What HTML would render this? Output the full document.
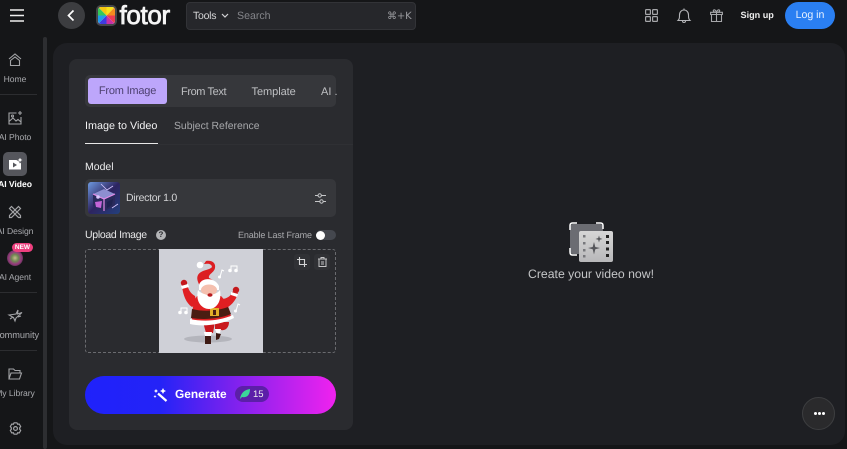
<!DOCTYPE html>
<html><head><meta charset="utf-8">
<style>
html,body{margin:0;padding:0;width:847px;height:449px;overflow:hidden;background:#151618;font-family:"Liberation Sans",sans-serif;color:#fff;text-rendering:geometricPrecision}
.a{position:absolute;white-space:nowrap}
svg{position:absolute;overflow:visible}
.nav{position:absolute;left:-15px;width:60px;text-align:center;font-size:8.6px;letter-spacing:-.05px;color:#a9aaae;white-space:nowrap;line-height:10px}
.sep{position:absolute;left:0;width:37px;height:1px;background:#2c2d30}
</style></head><body>

<!-- top bar -->
<svg style="left:9px;top:9px" width="16" height="14" fill="none" stroke="#eee" stroke-width="1.400"><path d="M1 1H15M1 6.500H15M1 12H15"/></svg>
<div class="a" style="left:58px;top:2px;width:27px;height:27px;border-radius:50%;background:#3c3d40"></div>
<svg style="left:58px;top:2px" width="27" height="27" fill="none" stroke="#fff" stroke-width="1.700"><path d="M15.500 8.500L10.500 13.500L15.500 18.500"/></svg>
<svg style="left:96px;top:5px" width="21" height="21" viewBox="0 0 21 21">
<defs><clipPath id="lg"><rect x="2" y="2" width="17" height="17" rx="3"/></clipPath></defs>
<rect x="0" y="0" width="21" height="21" rx="5" fill="#45464a"/>
<g clip-path="url(#lg)">
<rect x="2" y="2" width="17" height="17" fill="#fff"/>
<path d="M10.500 10.500L2 2H10.500Z" fill="#f5c511"/><path d="M10.500 10.500L10.500 2H19Z" fill="#f7e11b"/>
<path d="M10.500 10.500L19 2V10.500Z" fill="#f58a1f"/><path d="M10.500 10.500H19V19Z" fill="#ec3b54"/>
<path d="M10.500 10.500L19 19H10.500Z" fill="#c531a8"/><path d="M10.500 10.500V19H2Z" fill="#3f3be0"/>
<path d="M10.500 10.500L2 19V10.500Z" fill="#1f9bea"/><path d="M10.500 10.500H2V2Z" fill="#35c75a"/>
</g></svg>
<div class="a" style="left:119.500px;top:-1px;font-size:26px;line-height:32px;letter-spacing:-.35px;color:#f5f5f5;-webkit-text-stroke:.8px #f5f5f5">fotor</div>

<div class="a" style="left:186px;top:2px;width:228px;height:26px;background:#26272b;border:1px solid #323337;border-radius:4px"></div>
<div class="a" style="left:193px;top:9.500px;font-size:10.500px;line-height:13px;letter-spacing:-.25px;color:#d4d4d6">Tools</div>
<svg style="left:221px;top:13px" width="8" height="6" fill="none" stroke="#d4d4d6" stroke-width="1.200"><path d="M1 1L4 4L7 1"/></svg>
<div class="a" style="left:237px;top:9.500px;font-size:10.600px;line-height:13px;color:#84858a">Search</div>
<div class="a" style="left:387px;top:9.500px;font-size:10px;line-height:13px;letter-spacing:-.1px;color:#9b9ca0;font-family:'DejaVu Sans',sans-serif">⌘+K</div>

<svg style="left:645px;top:9px" width="13" height="13" fill="none" stroke="#a5a6a9" stroke-width="1.200"><rect x=".6" y=".6" width="4.800" height="4.800" rx=".8"/><rect x="7.600" y=".6" width="4.800" height="4.800" rx=".8"/><rect x=".6" y="7.600" width="4.800" height="4.800" rx=".8"/><rect x="7.600" y="7.600" width="4.800" height="4.800" rx=".8"/></svg>
<svg style="left:677px;top:8px" width="14" height="16" fill="none" stroke="#b4b5b8" stroke-width="1.100"><path d="M1 12.500C2.500 11 2.500 9.500 2.500 7C2.500 4 4.500 2 7 2S11.500 4 11.500 7C11.500 9.500 11.500 11 13 12.500ZM5.500 13C5.500 15 8.500 15 8.500 13M7 .5V2"/></svg>
<svg style="left:710px;top:9px" width="13" height="13" fill="none" stroke="#a5a6a9" stroke-width="1.100"><path d="M1.500 5.500H11.500V12.500H1.500ZM.6 3.300H12.400V5.500H.6ZM6.500 3.300V12.500M6.500 3.300C4 3.300 2.800 2.200 3.500 1.200C4.300 .2 6 1.200 6.500 3.300C7 1.200 8.700 .2 9.500 1.200C10.200 2.200 9 3.300 6.500 3.300Z"/></svg>
<div class="a" style="left:740.500px;top:9px;font-size:9.100px;line-height:13px;font-weight:700;color:#eee">Sign up</div>
<div class="a" style="left:785px;top:2px;width:50px;height:27px;border-radius:14px;background:#2a7ff2;font-size:10.600px;line-height:27px;text-align:center;color:#e8f1ff">Log in</div>

<!-- sidebar scrollbar -->
<div class="a" style="left:43px;top:37px;width:4px;height:412px;background:#2d2e31;border-radius:2px"></div>

<svg style="left:8px;top:53px" width="14" height="14" fill="none" stroke="#a3a4a7" stroke-width="1.100"><path d="M1 6L7 1L13 6M2.500 7.500L7 4L11.500 7.500V12.500H2.500Z"/></svg>
<div class="nav" style="top:74px">Home</div>
<div class="sep" style="top:94px"></div>

<svg style="left:8px;top:111px" width="15" height="14" fill="none" stroke="#a3a4a7" stroke-width="1.100"><path d="M8.500 2H1V13H13V6M1 10.500L5 7L8 10L10 8.500L13 11"/><circle cx="4.500" cy="5" r="1"/><path d="M12 0V4M10 2H14"/></svg>
<div class="nav" style="top:132px">AI Photo</div>

<div class="a" style="left:3px;top:152px;width:24px;height:24px;border-radius:5px;background:#55565c"></div>
<svg style="left:8px;top:157px" width="15" height="14"><path d="M1 3H9L13 6V12.500H1Z" fill="#fff"/><path d="M5 5.500L9 8L5 10.500Z" fill="#55565c"/><path d="M12 0L13 2L15 3L13 4L12 6L11 4L9 3L11 2Z" fill="#fff" stroke="#55565c" stroke-width=".6"/></svg>
<div class="nav" style="top:178.500px;color:#fff;font-weight:700">AI Video</div>

<svg style="left:8px;top:205px" width="14" height="14" fill="none" stroke="#a3a4a7" stroke-width="1.200"><path d="M1.500 3.500L3.500 1.500L12.500 10.500V12.500H10.500ZM12.500 3.500L10.500 1.500L1.500 10.500V12.500H3.500Z"/></svg>
<div class="nav" style="top:226px">AI Design</div>

<svg style="left:7px;top:250px" width="16" height="16"><defs><radialGradient id="ag" cx=".5" cy=".5" r=".6"><stop offset="0" stop-color="#c9b98f"/><stop offset=".35" stop-color="#6e8c52"/><stop offset=".65" stop-color="#97387f"/><stop offset="1" stop-color="#3c3338"/></radialGradient></defs><circle cx="8" cy="8" r="8" fill="url(#ag)"/></svg>
<div class="a" style="left:12px;top:243px;width:21px;height:9px;border-radius:5px;background:#ee3f7e;font-size:6.500px;line-height:9px;font-weight:700;text-align:center;color:#fff">NEW</div>
<div class="nav" style="top:272px">AI Agent</div>
<div class="sep" style="top:292px"></div>

<svg style="left:8px;top:309px" width="15" height="13" fill="none" stroke="#a3a4a7" stroke-width="1.100"><path d="M1 6L8 5L10 1L9.500 5L14 3.500L8 9L7 12L5.500 8.500ZM2 10L5 8M10 8L13 7"/></svg>
<div class="nav" style="top:330px;font-size:9.200px;left:-14px">Community</div>
<div class="sep" style="top:350px"></div>

<svg style="left:8px;top:368px" width="14" height="12" fill="none" stroke="#a3a4a7" stroke-width="1.100"><path d="M1 11V1H5.500L7 2.500H12V5M1 11H11.500L13.500 5H3Z"/></svg>
<div class="nav" style="top:388px">My Library</div>
<svg style="left:9px;top:422px" width="13" height="13" fill="none" stroke="#a3a4a7" stroke-width="1.200"><path d="M5 .8H8L8.600 2.300L10.200 2L11.700 4.500L10.700 5.800V7.200L11.700 8.500L10.200 11L8.600 10.700L8 12.200H5L4.400 10.700L2.800 11L1.300 8.500L2.300 7.200V5.800L1.300 4.500L2.800 2L4.400 2.300Z" stroke-linejoin="round"/><circle cx="6.500" cy="6.500" r="1.900"/></svg>

<!-- main panel -->
<div class="a" style="left:53px;top:43px;width:792px;height:402px;background:#1e1f23;border-radius:14px"></div>

<!-- left card -->
<div class="a" style="left:69px;top:59px;width:284px;height:371px;background:#2a2b2f;border-radius:8px"></div>
<div class="a" style="left:85px;top:75px;width:251px;height:32px;background:#36373b;border-radius:5px"></div>
<div class="a" style="left:88px;top:78px;width:79px;height:26px;background:#bda6fb;border-radius:3px;font-size:11px;line-height:26.500px;text-align:center;letter-spacing:-.2px;color:#4b3f6e">From Image</div>
<div class="a" style="left:181px;top:84.500px;font-size:11px;line-height:14px;letter-spacing:-.4px;color:#bfc0c3">From Text</div>
<div class="a" style="left:251.500px;top:84.500px;font-size:11px;line-height:14px;letter-spacing:-.05px;color:#bfc0c3">Template</div>
<div class="a" style="left:321px;top:84.500px;font-size:11px;line-height:14px;color:#bfc0c3">AI .</div>

<div class="a" style="left:85px;top:120px;font-size:10.800px;line-height:13px;color:#f2f2f3">Image to Video</div>
<div class="a" style="left:174px;top:120px;font-size:10.400px;line-height:13px;color:#a6a7aa">Subject Reference</div>
<div class="a" style="left:85px;top:143px;width:73px;height:1px;background:#e8e8e8"></div>
<div class="a" style="left:158px;top:143.500px;width:195px;height:1px;background:#2f3034"></div>

<div class="a" style="left:85px;top:161px;font-size:10.500px;line-height:13px;color:#ededee">Model</div>
<div class="a" style="left:85px;top:179px;width:251px;height:38px;background:#36373b;border-radius:5px"></div>
<svg style="left:88px;top:182px" width="32" height="32" viewBox="0 0 32 32">
<defs><linearGradient id="cb" x1="0" y1="0" x2="1" y2="1"><stop offset="0" stop-color="#6f9ae0"/><stop offset=".5" stop-color="#2d2460"/><stop offset="1" stop-color="#23407e"/></linearGradient></defs>
<rect width="32" height="32" rx="3" fill="url(#cb)"/>
<path d="M16 7L27 12V24L16 29L5 24V12Z" fill="#2a2a5c"/><path d="M16 7L27 12L16 17L5 12Z" fill="#8d8fd0"/><path d="M16 17V29M5 12L16 17L27 12" stroke="#e48be8" stroke-width="1.200" fill="none"/><path d="M7 20L14 19L13 26L8 25Z" fill="#c564d8"/><path d="M19 20L25 17L24 23L19 26Z" fill="#1f2350"/><circle cx="10" cy="15" r="1.800" fill="#dcc8ff"/><path d="M13 2L19 8L25 4M24 26L30 22" stroke="#d6c6ff" fill="none" stroke-width=".8"/>
</svg>
<div class="a" style="left:126px;top:191px;font-size:10.500px;line-height:14px;letter-spacing:-.28px;color:#d4d4d6">Director 1.0</div>
<svg style="left:315px;top:193px" width="11" height="11" fill="none" stroke="#c5c6c8" stroke-width="1"><path d="M0 2.500H3M6.500 2.500H11M0 8.500H5M8 8.500H11"/><circle cx="4.700" cy="2.500" r="1.700"/><circle cx="6.500" cy="8.500" r="1.700"/></svg>

<div class="a" style="left:85px;top:228px;font-size:10.500px;line-height:14px;letter-spacing:-.3px;color:#e8e8e9">Upload Image</div>
<div class="a" style="left:156px;top:230px;width:10px;height:10px;border-radius:50%;background:#b3b4b7;color:#2a2b2f;font-size:8px;line-height:10px;font-weight:700;text-align:center">?</div>
<div class="a" style="left:238px;top:229px;font-size:9px;line-height:13px;letter-spacing:-.13px;color:#a9aaad">Enable Last Frame</div>
<div class="a" style="left:316px;top:230px;width:20px;height:10px;border-radius:5px;background:#44474e"></div>
<div class="a" style="left:316px;top:231px;width:9px;height:9px;border-radius:50%;background:#fff"></div>

<div class="a" style="left:85px;top:249px;width:249px;height:102px;border:1px dashed #6a6b6f;border-radius:3px"></div>
<div class="a" style="left:159px;top:249px;width:104px;height:104px;background:#cfd0d7"></div>
<!-- santa -->
<svg style="left:159px;top:249px" width="104" height="104" viewBox="0 0 104 104">
<ellipse cx="49" cy="90" rx="24" ry="3.500" fill="#b4b5bc"/>
<path d="M41 37C37 30 37 25 44 22C50 20 55 19 52 16C50 14 47 15 45 15L47 12C53 11 57 14 56 19C55 24 49 25 50 29C53 30 56 33 58 36Z" fill="#dc1e22"/>
<circle cx="41" cy="16" r="3.300" fill="#fff"/>
<path d="M36 47C31 44 30 41 28 36L23 37C24 46 27 54 33 58L38 55Z" fill="#e01f22"/>
<path d="M62 50C68 50 72 47 74 42L79 44C77 52 71 58 65 60L60 56Z" fill="#e01f22"/>
<circle cx="25" cy="34" r="3.200" fill="#c4181c"/><path d="M22 37L29 35L30 38L23 40Z" fill="#fff"/>
<circle cx="77" cy="41" r="3.200" fill="#c4181c"/><path d="M72 43L79 45L78 48L72 46Z" fill="#fff"/>
<path d="M44 73H56L54 84H47ZM56 73H70C70 79 66 82 62 81L60 84L56 80Z" fill="#c9191d"/>
<path d="M45 83H53L52 87H46Z" fill="#fff"/><path d="M56 80L62 80L61 84L58 85Z" fill="#fff"/>
<path d="M46 87H52V95H46Z" fill="#3d1a14"/><path d="M57 84L62 85L60 90L57 91Z" fill="#3d1a14"/>
<path d="M38 47C34 53 33 62 33 71C45 74 60 73 72 68C71 60 67 52 62 47Z" fill="#e01f22"/>
<path d="M33 60C45 63 58 62 69 58L72 65C60 70 45 71 32 69Z" fill="#4a1d12"/>
<rect x="51" y="59" width="9" height="8" fill="#e3ae28"/><rect x="54" y="61" width="3" height="5" fill="#4a1d12"/>
<path d="M31 70C45 73 60 72 74 66L75 69C61 76 44 78 31 75Z" fill="#fff"/>
<path d="M40 36C42 28 56 28 60 37V41H40Z" fill="#fff"/>
<ellipse cx="50" cy="41" rx="8" ry="5.500" fill="#f4bfae"/>
<path d="M39 41C36 54 44 60 50 60C57 60 63 53 61 41C58 45 54 45 50 47C47 45 42 45 39 41Z" fill="#fff"/>
<ellipse cx="51" cy="46" rx="2.500" ry="1.800" fill="#b81c20"/>
<g fill="#fff" stroke="#fff" stroke-width="1">
<path d="M72 21V17H78V21" fill="none"/><circle cx="71" cy="21.500" r="1.300"/><circle cx="77" cy="21.500" r="1.300"/>
<path d="M22 63V59H28V63" fill="none"/><circle cx="21" cy="63.500" r="1.300"/><circle cx="27" cy="63.500" r="1.300"/>
<path d="M61 28L63 21L65 22" fill="none"/><circle cx="60.500" cy="28" r="1"/>
<path d="M77 62L79 55L81 56" fill="none"/><circle cx="76.500" cy="62" r="1"/>
</g>
</svg>
<div class="a" style="left:294px;top:254px;width:16px;height:16px;border-radius:3px;background:#303135"></div>
<div class="a" style="left:314px;top:254px;width:16px;height:16px;border-radius:3px;background:#303135"></div>
<svg style="left:297px;top:257px" width="10" height="10" fill="none" stroke="#d5d5d7" stroke-width="1.100"><path d="M2.500 0V7.500H10M0 2.500H7.500V10"/></svg>
<svg style="left:318px;top:257px" width="9" height="10" fill="none" stroke="#c5c5c7" stroke-width="1"><path d="M0 2H9M3 2V.5H6V2M1 2V9.500H8V2M3 5H6M3 7H6"/></svg>

<!-- generate -->
<div class="a" style="left:85px;top:376px;width:251px;height:38px;border-radius:19px;background:linear-gradient(90deg,#1f22fb 0%,#2423f7 30%,#7a22ee 58%,#f022ee 100%)"></div>
<svg style="left:153px;top:388px" width="15" height="14" fill="none"><path d="M5 5.500L13.500 13" stroke="#fff" stroke-width="2.200"/><path d="M10 0L11 2L13 3L11 4L10 6L9 4L7 3L9 2ZM3 1L3.700 2.300L5 3L3.700 3.700L3 5L2.300 3.700L1 3L2.300 2.300ZM2 7L2.500 8L3.500 8.500L2.500 9L2 10L1.500 9L.5 8.500L1.500 8Z" fill="#fff"/></svg>
<div class="a" style="left:175px;top:387px;font-size:11.900px;line-height:15px;font-weight:700;color:#fff">Generate</div>
<div class="a" style="left:235px;top:386px;width:34px;height:16px;border-radius:8px;background:#5c1fa8"></div>
<svg style="left:240px;top:389px" width="10" height="10"><path d="M0 10C1 4 4 1 10 0C10 6 7 9 2 8Z" fill="#3cd69a"/></svg>
<div class="a" style="left:253px;top:388px;font-size:9.500px;line-height:13px;color:#eee">15</div>

<!-- right placeholder -->
<svg style="left:569px;top:222px" width="44" height="40">
<defs><linearGradient id="pl" x1="0" y1="0" x2="0" y2="1"><stop offset="0" stop-color="#d6d6d6"/><stop offset="1" stop-color="#b8b8ba"/></linearGradient></defs>
<rect x="1" y="2" width="33" height="30" rx="3" fill="#6b6c72"/>
<path d="M1 8V3.500Q1 1 3.500 1H8M27 1H31.500Q34 1 34 3.500V7M1 26V30Q1 33 3.500 33H8" fill="none" stroke="#fff" stroke-width="1.500"/>
<rect x="10" y="9" width="34" height="31" rx="2" fill="url(#pl)"/>
<g fill="#77787c"><rect x="14" y="13" width="2.500" height="2.500"/><rect x="14" y="20" width="2.500" height="2.500"/><rect x="14" y="27" width="2.500" height="2.500"/><rect x="14" y="33" width="2.500" height="2.500"/></g>
<g fill="#222"><rect x="37" y="13" width="3" height="3"/><rect x="37" y="19" width="3" height="3"/><rect x="37" y="25.500" width="3" height="3"/><rect x="37" y="32" width="3" height="3"/></g>
<path d="M25 20L26.300 25L31 26L26.300 27.200L25 32.500L23.700 27.200L19 26L23.700 25ZM30 13.500L30.800 16L33.500 17L30.800 17.800L30 20.500L29.200 17.800L26.500 17L29.200 16Z" fill="#55565a"/>
</svg>
<div class="a" style="left:528px;top:267px;font-size:12.250px;line-height:15px;color:#c3c4c6">Create your video now!</div>

<div class="a" style="left:802px;top:397px;width:31px;height:31px;border-radius:50%;background:#2a2a2c;border:1px solid #3d3e40"></div>
<div class="a" style="left:814px;top:412px;width:3px;height:3px;border-radius:50%;background:#fff;box-shadow:4px 0 0 #fff,8px 0 0 #fff"></div>

</body></html>
